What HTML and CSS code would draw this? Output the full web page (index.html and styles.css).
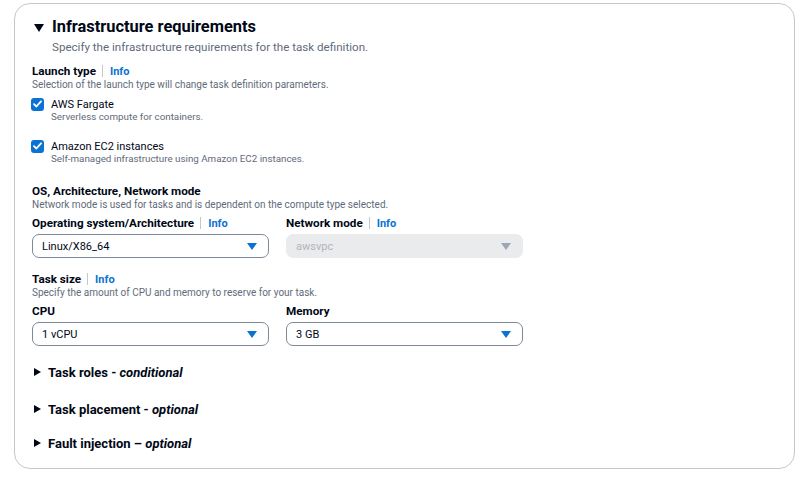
FILE: index.html
```html
<!DOCTYPE html>
<html lang="en">
<head>
<meta charset="utf-8">
<title>Infrastructure requirements</title>
<link rel="stylesheet" href="styles.css">
</head>
<body>
<div class="card">
  <div class="section-head">
    <svg class="caret-down" width="10" height="8" viewBox="0 0 10 8"><path d="M0 0H10L5 8Z" fill="#000716"/></svg>
    <h2 class="title">Infrastructure requirements</h2>
  </div>
  <p class="section-desc">Specify the infrastructure requirements for the task definition.</p>

  <div class="field launch">
    <div class="label-row"><span class="label">Launch type</span><span class="sep"></span><a class="info">Info</a></div>
    <div class="helper">Selection of the launch type will change task definition parameters.</div>
    <div class="check-item">
      <div class="check-row"><span class="checkbox"><svg width="9" height="8" viewBox="0 0 9 8"><path d="M1 4.2L3.4 6.5L8 1.3" fill="none" stroke="#fff" stroke-width="1.8" stroke-linecap="round" stroke-linejoin="round"/></svg></span><span class="check-label">AWS Fargate</span></div>
      <div class="check-desc">Serverless compute for containers.</div>
    </div>
    <div class="check-item second">
      <div class="check-row"><span class="checkbox"><svg width="9" height="8" viewBox="0 0 9 8"><path d="M1 4.2L3.4 6.5L8 1.3" fill="none" stroke="#fff" stroke-width="1.8" stroke-linecap="round" stroke-linejoin="round"/></svg></span><span class="check-label">Amazon EC2 instances</span></div>
      <div class="check-desc">Self-managed infrastructure using Amazon EC2 instances.</div>
    </div>
  </div>

  <div class="field os">
    <div class="label-row"><span class="label">OS, Architecture, Network mode</span></div>
    <div class="helper">Network mode is used for tasks and is dependent on the compute type selected.</div>
    <div class="cols">
      <div class="col">
        <div class="label-row"><span class="label">Operating system/Architecture</span><span class="sep"></span><a class="info">Info</a></div>
        <div class="select"><span>Linux/X86_64</span><svg width="10" height="7" viewBox="0 0 10 7"><path d="M0 0H10L5 7Z" fill="#0972d3"/></svg></div>
      </div>
      <div class="col">
        <div class="label-row"><span class="label">Network mode</span><span class="sep"></span><a class="info">Info</a></div>
        <div class="select disabled"><span>awsvpc</span><svg width="10" height="7" viewBox="0 0 10 7"><path d="M0 0H10L5 7Z" fill="#9ba7b6"/></svg></div>
      </div>
    </div>
  </div>

  <div class="field size">
    <div class="label-row"><span class="label">Task size</span><span class="sep"></span><a class="info">Info</a></div>
    <div class="helper">Specify the amount of CPU and memory to reserve for your task.</div>
    <div class="cols">
      <div class="col">
        <div class="label-row"><span class="label">CPU</span></div>
        <div class="select"><span>1 vCPU</span><svg width="10" height="7" viewBox="0 0 10 7"><path d="M0 0H10L5 7Z" fill="#0972d3"/></svg></div>
      </div>
      <div class="col">
        <div class="label-row"><span class="label">Memory</span></div>
        <div class="select"><span>3 GB</span><svg width="10" height="7" viewBox="0 0 10 7"><path d="M0 0H10L5 7Z" fill="#0972d3"/></svg></div>
      </div>
    </div>
  </div>

  <div class="sub roles"><svg width="7" height="8" viewBox="0 0 7 8"><path d="M0 0L7 4L0 8Z" fill="#000716"/></svg><span>Task roles - <em>conditional</em></span></div>
  <div class="sub placement"><svg width="7" height="8" viewBox="0 0 7 8"><path d="M0 0L7 4L0 8Z" fill="#000716"/></svg><span>Task placement - <em>optional</em></span></div>
  <div class="sub fault"><svg width="7" height="8" viewBox="0 0 7 8"><path d="M0 0L7 4L0 8Z" fill="#000716"/></svg><span>Fault injection – <em>optional</em></span></div>
</div>
</body>
</html>
```

FILE: styles.css
```css
* { box-sizing: border-box; }
html, body { margin: 0; padding: 0; background: #ffffff; }
body {
  font-family: Roboto, "Noto Sans", Arial, sans-serif;
  color: #000716;
  padding: 3px 12px 0 14px;
}
.card {
  width: 781px;
  height: 466px;
  border: 1px solid #c6c6cd;
  border-radius: 16px;
  padding: 12px 17px 0 17px;
}
.section-head {
  display: flex;
  align-items: center;
  height: 22px;
  padding-left: 2px;
}
.caret-down { margin-right: 8px; margin-top: 1px; }
.title {
  margin: 0;
  font-size: 16.4px;
  font-weight: 700;
  line-height: 22px;
}
.section-desc {
  margin: 1px 0 0 20px;
  font-size: 11.6px;
  line-height: 16px;
  color: #5f6b7a;
}
.field.launch { margin-top: 9px; }
.label-row {
  display: flex;
  align-items: center;
  height: 14px;
}
.label {
  font-size: 11.7px;
  font-weight: 700;
  line-height: 13px;
}
.sep {
  width: 1px;
  height: 12px;
  background: #c6c6cd;
  margin: 0 7px 0 6px;
}
.info {
  font-size: 11px;
  font-weight: 700;
  color: #0972d3;
  line-height: 13px;
}
.helper {
  margin-top: 1px;
  font-size: 10px;
  line-height: 12px;
  color: #5f6b7a;
}
.check-item { margin-top: 6px; }
.check-item.second { margin-top: 16px; }
.check-row {
  display: flex;
  align-items: center;
  height: 14px;
}
.checkbox {
  width: 13px;
  height: 13px;
  border-radius: 3px;
  background: #0972d3;
  display: flex;
  align-items: center;
  justify-content: center;
  margin-left: -1px;
  margin-right: 7px;
}
.check-label {
  font-size: 11px;
  line-height: 13px;
}
.check-desc {
  margin-left: 19px;
  font-size: 9.8px;
  line-height: 12px;
  color: #5f6b7a;
}
.field.os { margin-top: 19px; }
.field.size { margin-top: 14px; }
.cols {
  display: flex;
  gap: 17px;
  margin-top: 5px;
}
.col { width: 237px; }
.select {
  margin-top: 4px;
  height: 24px;
  border: 1px solid #7d8998;
  border-radius: 7px;
  display: flex;
  align-items: center;
  justify-content: space-between;
  padding: 0 11px 0 9px;
  font-size: 11px;
}
.select.disabled {
  background: #e9ebed;
  border-color: #e9ebed;
  color: #b4b4bb;
}
.sub {
  display: flex;
  align-items: center;
  height: 18px;
  padding-left: 2px;
  font-size: 13px;
  font-weight: 700;
}
.sub svg { margin-right: 7px; }
.sub em { font-style: italic; }
.sub.roles { margin-top: 17px; }
.sub.placement { margin-top: 19px; }
.sub.fault { margin-top: 16px; }
```
